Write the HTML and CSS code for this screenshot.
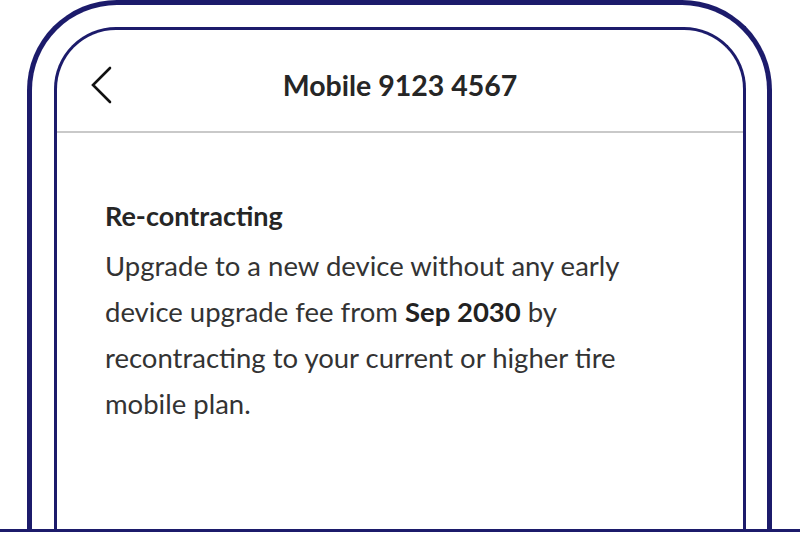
FILE: index.html
```html
<!DOCTYPE html>
<html lang="en">
<head>
  <meta charset="UTF-8">
  <meta name="viewport" content="width=device-width, initial-scale=1.0">
  <title>Mobile 9123 4567</title>
  <link rel="stylesheet" href="styles.css">
</head>
<body>
  <div class="page">
    <div class="device">
      <div class="screen">
        <div class="top-bar">
          <button class="back" aria-label="Back">
            <svg width="24" height="40" viewBox="0 0 24 40">
              <polyline points="21,3 4,20 21,37" fill="none" stroke="#111" stroke-width="2.6" stroke-linecap="round" stroke-linejoin="miter"/>
            </svg>
          </button>
          <div class="title">Mobile 9123 4567</div>
          <div></div>
        </div>

        <div class="content">
          <div class="section-title">Re-contracting</div>
          <p class="info">
            Upgrade to a new device without any early device upgrade fee from <b>Sep 2030</b> by recontracting to your current or higher tire mobile plan.
          </p>
        </div>
      </div>
    </div>
    <div class="ground"></div>
  </div>
</body>
</html>
```

FILE: styles.css
```css
/* Reset */
* {
  margin: 0;
  padding: 0;
  box-sizing: border-box;
}

body {
  font-family: 'Lato', 'Liberation Sans', sans-serif;
  background-color: #fff;
  color: #2a2a2a;
}

.page {
  height: 533px;
  display: flex;
  flex-direction: column;
}

/* Phone outline */
.device {
  flex: 1;
  margin-left: 27px;
  width: 745px;
  border: 5px solid #1c1b6b;
  border-bottom: none;
  border-radius: 90px 90px 0 0;
  display: flex;
  flex-direction: column;
}

.screen {
  flex: 1;
  margin: 22px 21px 0 22px;
  border: 3px solid #1c1b6b;
  border-bottom: none;
  border-radius: 62px 62px 0 0;
}

.ground {
  height: 3px;
  margin-bottom: 1px;
  background-color: #1c1b6b;
}

/* Header */
.top-bar {
  height: 103px;
  padding-top: 8px;
  display: grid;
  grid-template-columns: 1fr auto 1fr;
  align-items: center;
  border-bottom: 2px solid #c9c9c9;
}

.back {
  justify-self: start;
  margin-left: 32px;
  background: none;
  border: none;
  display: flex;
}

.title {
  font-size: 28.5px;
  font-weight: 700;
  color: #262626;
}

/* Content */
.content {
  padding: 66px 48px 0 48px;
}

.section-title {
  font-size: 27px;
  font-weight: 700;
  color: #262626;
  margin-bottom: 11px;
}

.info {
  font-size: 27.5px;
  line-height: 46px;
  color: #333;
  max-width: 560px;
}

.info b {
  font-weight: 700;
  color: #222;
}
```
